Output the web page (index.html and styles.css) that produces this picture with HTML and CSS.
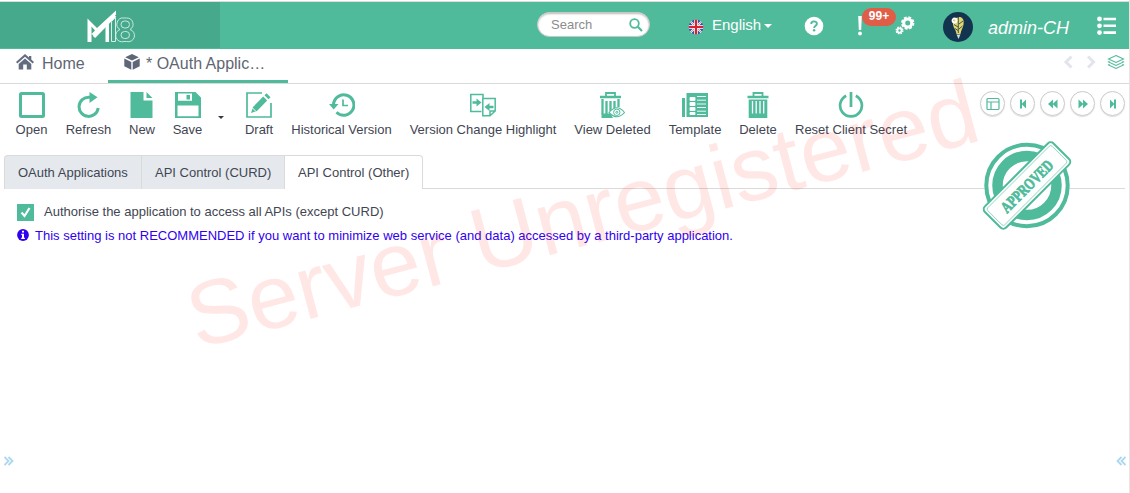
FILE: index.html
```html
<!DOCTYPE html>
<html lang="en">
<head>
<meta charset="utf-8">
<title>OAuth Applications</title>
<link rel="stylesheet" href="styles.css">
</head>
<body>
<div class="app">
  <header class="header">
    <div class="brand">
      <svg width="48" height="36" viewBox="0 0 48 36">
        <path d="M.5 9.500 10 19 29 1.500V5.500L7.500 27.500 4.500 25V33H.5z" fill="#fff"/>
        <path d="M4.500 17.500 8 21.500 4.500 25z" fill="#47a98b"/>
        <path d="M7 28 28 6.500" stroke="#fff" stroke-width="3.200"/>
        <path d="M18.500 17.500 22 14.500V33H18.500z" fill="#fff"/>
        <path d="M24.500 12.500 28.500 8.500V32.500H24.500z" fill="none" stroke="#d5efe6"/>
        <g fill="none" stroke="#d5efe6" stroke-width=".9">
          <path d="M33 20.500A6.200 6.200 0 0 1 37 9H39.500A6.200 6.200 0 0 1 43 20.500 6.200 6.200 0 0 1 39.500 32.500H37A6.200 6.200 0 0 1 33 20.500z"/>
          <rect x="34" y="12" width="8.500" height="7" rx="3.500"/>
          <rect x="34" y="22.500" width="8.500" height="7" rx="3.500"/>
        </g>
      </svg>
    </div>
    <div class="search"><span>Search</span>
      <svg width="14" height="14" viewBox="0 0 14 14" fill="none" stroke="#4fbb9b"><circle cx="5.500" cy="5.500" r="4.300" stroke-width="1.800"/><path d="M8.800 8.800 13 13" stroke-width="2.200"/></svg>
    </div>
    <div class="language">
      <svg class="flag" width="16" height="16" viewBox="0 0 16 16">
        <defs><clipPath id="round"><circle cx="8" cy="8" r="7.400"/></clipPath></defs>
        <g clip-path="url(#round)"><path fill="#3456a5" d="M0 0h16v16H0z"/><path d="M1 1 15 15M15 1 1 15" stroke="#fff" stroke-width="1.900"/><path d="M1 1 15 15M15 1 1 15" stroke="#d86c75" stroke-width=".8"/><path d="M8 0v16M0 8h16" stroke="#fff" stroke-width="3.600"/><path d="M8 0v16M0 8h16" stroke="#d8222f" stroke-width="2.200"/></g>
      </svg>
      <span>English</span><i class="caret"></i>
    </div>
    <svg class="help" width="20" height="20" viewBox="0 0 20 20"><circle cx="10" cy="10" r="9.300" fill="#fff"/><path d="M7.200 8C7.200 4.500 12.900 4.500 12.900 7.700 12.900 9.700 10.100 9.700 10.100 12" fill="none" stroke="#4fbb9b" stroke-width="1.900"/><circle cx="10.100" cy="14.300" r="1.200" fill="#4fbb9b"/></svg>
    <div class="alerts">
      <svg width="6" height="20" viewBox="0 0 6 20" fill="#fff"><path d="M1.200 0h3.600l-.6 14H1.800z"/><circle cx="3" cy="17.500" r="1.900"/></svg>
      <b class="count">99+</b>
    </div>
    <svg class="gears" width="20" height="20" viewBox="0 0 20 20" fill="none" stroke="#fff"><circle cx="12.700" cy="8" r="4" stroke-width="3"/><circle cx="12.700" cy="8" r="5.800" stroke-width="1.800" stroke-dasharray="2.800 1.755"/><circle cx="4.500" cy="15.500" r="2.100" stroke-width="1.800"/><circle cx="4.500" cy="15.500" r="3.300" stroke-width="1.400" stroke-dasharray="1.500 1.092"/></svg>
    <svg class="avatar" width="30" height="30" viewBox="0 0 30 30"><circle cx="15" cy="15" r="15" fill="#12344f"/><path d="M15 5.500C19 3.500 21.500 8 20.500 12.500 20 16 18 18 17.500 22H13.500C13 18 10.500 16 10 12.500 9.500 9 11 6 15 5.500z" fill="#e3d66b"/><path d="M15.300 5v16M11 12.500 15 15M20 9 16 12M12 16.500l3 2M19.500 14 16 17" stroke="#12344f" fill="none" stroke-width=".8"/><circle cx="11.500" cy="8.500" r="2" fill="none" stroke="#fff" stroke-width="1.800"/><path d="M13.500 22.500h4L15.500 27z" fill="#cfdbe0"/></svg>
    <span class="user">admin-CH</span>
    <svg class="menu" width="20" height="20" viewBox="0 0 20 20" fill="#fff"><circle cx="2.500" cy="3" r="2.400"/><circle cx="2.500" cy="9.800" r="2.400"/><circle cx="2.500" cy="16.600" r="2.400"/><path d="M6.500 1.700h12.500v2.600H6.500zM6.500 8.500h12.500v2.600H6.500zM6.500 15.300h12.500v2.600H6.500z"/></svg>
  </header>

  <nav class="pages">
    <a class="page home"><svg width="18" height="16" viewBox="0 0 18 16" fill="#636d80"><path d="M9 0 13 3.600V2h2.300v3.600L18 8.100l-1.300 1.400L9 2.800 1.300 9.500 0 8.100z"/><path d="M9 4.500 15.300 10v5.500h-4.500V10.500H7.200v5H2.700V10z"/></svg><span>Home</span></a>
    <a class="page active"><svg width="16" height="16" viewBox="0 0 16 16" fill="#5e6677"><path d="M8 0 14.800 3.200 8 6.600 1.200 3.200zM.3 4.500 7.300 8v7.700L.3 12.200zM15.700 4.500 8.700 8v7.700l7-3.500z"/></svg><span>* OAuth Applic…</span></a>
    <div class="page-tools">
      <svg width="64" height="16" viewBox="0 0 64 16" fill="none"><path d="M10.500 2.500 5 8l5.500 5.500" stroke="#e2e6ec" stroke-width="3"/><path d="M27 2.500 32.500 8 27 13.500" stroke="#e2e6ec" stroke-width="3"/><path d="M55 1.500 62.500 5 55 8.500 47.500 5zM48.500 7.200 47.500 8 55 11.500 62.500 8l-1-.8M48.500 10.200 47.500 11 55 14.500 62.500 11l-1-.8" stroke="#4fbb9b" stroke-width="1.100"/></svg>
    </div>
  </nav>

  <div class="toolbar">
    <a class="tool w-open"><svg viewBox="0 0 26 26"><rect x="1.500" y="1.500" width="23" height="23" rx="1" fill="none" stroke="#4fbb9b" stroke-width="3"/></svg><span>Open</span></a>
    <a class="tool w-refresh"><svg viewBox="0 0 26 26"><path d="M16.500 5.200H13A9.600 9.600 0 1 0 22.200 16" fill="none" stroke="#4fbb9b" stroke-width="3"/><path d="M13.500 0 21.500 5.300 13.500 11z" fill="#4fbb9b"/></svg><span>Refresh</span></a>
    <a class="tool w-new"><svg viewBox="0 0 26 26" fill="#4fbb9b"><path d="M1.500 0h13v8.500h9V26h-22zM17.500 0l6 6h-6z"/></svg><span>New</span></a>
    <a class="tool w-save"><svg viewBox="0 0 26 26"><path fill="#4fbb9b" fill-rule="evenodd" d="M0 0h20.500L26 5.500V26H0zM3 1.500v7.200h14V1.500zM2.500 13.500v10.700h21V13.500zM11.500 3h3.500v4.500h-3.500z"/></svg><span>Save</span></a>
    <i class="caret dark"></i>
    <a class="tool w-draft"><svg viewBox="0 0 26 26"><path d="M16 1H1v24h24V11" fill="none" stroke="#4fbb9b" stroke-width="1.700"/><path fill="#4fbb9b" d="m5 21 2-6L17.200 4.500l4 4L11 19zM18.500 3.200 20.500 1.200 24.500 5.200 22.500 7.200z"/><path d="m6.500 16 3.500 3.500" stroke="#fff"/></svg><span>Draft</span></a>
    <a class="tool w-history"><svg viewBox="0 0 26 26" fill="none" stroke="#4fbb9b"><path d="M4.500 14V12.500A10.200 10.200 0 1 1 7.500 20.300" stroke-width="3"/><path d="M0 12h9.500l-4.800 5.500z" fill="#4fbb9b" stroke="none"/><path d="M14 7.500v6h5" stroke-width="1.700"/></svg><span>Historical Version</span></a>
    <a class="tool w-highlight"><svg viewBox="0 0 26 26" fill="none" stroke="#4fbb9b" stroke-width="1.500"><path d="M11.500 19.500H.8V2.500H13V6M12.800 6.500h12.400V19L20 23.800h-7.200zM20 23.500V19h5"/><path d="M2.500 10.500h5M23.500 15h-5" stroke-width="2.400"/><path d="M6.500 6.500 11.500 10.500 6.500 14.500zM19.500 11 14.500 15 19.500 19z" fill="#4fbb9b" stroke="none"/></svg><span>Version Change Highlight</span></a>
    <a class="tool w-view"><svg viewBox="0 0 26 26" fill="none" stroke="#4fbb9b"><path d="M6 4V1h9v3" stroke-width="1.800"/><path d="M0 5h21" stroke-width="2.500"/><path d="M2.500 7v15.500M6.500 9v13M10.500 9v10M14.500 9v8M18.500 7v8" stroke-width="2.300"/><path d="M1.500 21.500h9L13 26H1.500z" fill="#4fbb9b" stroke="none"/><path d="M9 20.500Q17 11 24.500 20.500 17 29 9 20.500z" fill="#fff" stroke-width="1.100"/><circle cx="16.800" cy="20.300" r="3.200"/><circle cx="16.800" cy="20.300" r="1"/></svg><span>View Deleted</span></a>
    <a class="tool w-template"><svg viewBox="0 0 26 26"><path fill="#4fbb9b" d="M0 6h3v19H0zM4.500 1H26v24H4.500z"/><path d="M8 5.500h5v3H8zM8 10.500h5v3H8zM8 15.500h5v3H8zM8 20.500h5v2H8zM15 4.500h9M15 8.200h9M15 12h9M15 15.500h9M15 19.200h9M15 22.500h9" fill="#fff" stroke="#fff" stroke-width=".9"/></svg><span>Template</span></a>
    <a class="tool w-delete"><svg viewBox="0 0 26 26" fill="none" stroke="#4fbb9b"><path d="M8.500 4V1h9v3" stroke-width="1.800"/><path d="M2.500 5h21" stroke-width="2.500"/><path fill="#4fbb9b" stroke="none" d="M3.700 7.500h18.600V26H3.700z"/><path d="M7.500 9v12.500M11.200 9v12.500M15 9v12.500M18.700 9v12.500" stroke="#fff" stroke-width="1.300"/></svg><span>Delete</span></a>
    <a class="tool w-reset"><svg viewBox="0 0 26 26" fill="none" stroke="#4fbb9b" stroke-width="2.700"><path d="M8.200 3.700A10.900 10.900 0 1 0 17.800 3.700M13 0v15"/></svg><span>Reset Client Secret</span></a>
    <div class="record-nav">
      <a class="round"><svg viewBox="0 0 14 14" fill="none" stroke="#4fbb9b" stroke-width="1.200"><rect x="1" y="1.500" width="12" height="11" rx="1"/><path d="M1 5h12M5 5v7.500"/></svg></a>
      <a class="round"><svg viewBox="0 0 14 14" fill="#4fbb9b"><path d="M4 2.500h2v4l4-4v9L6 7.500v4H4z"/></svg></a>
      <a class="round"><svg viewBox="0 0 14 14" fill="#4fbb9b"><path d="M7 2.500v9L2 7zM11.500 2.500v9L6.500 7z"/></svg></a>
      <a class="round"><svg viewBox="0 0 14 14" fill="#4fbb9b"><path d="M2.500 2.500v9L7.500 7zM7 2.500v9L12 7z"/></svg></a>
      <a class="round"><svg viewBox="0 0 14 14" fill="#4fbb9b"><path d="M10 2.500H8v4l-4-4v9l4-4v4h2z"/></svg></a>
    </div>
  </div>

  <div class="tabs">
    <a class="tab t1">OAuth Applications</a><a class="tab t2">API Control (CURD)</a><a class="tab t3 current">API Control (Other)</a>
  </div>

  <main class="content">
    <label class="check-row"><i class="checkbox"><svg width="17" height="17" viewBox="0 0 17 17"><path d="m4.500 8.500 3 3.500 5-8" fill="none" stroke="#fff" stroke-width="2.200"/></svg></i><span class="check-text">Authorise the application to access all APIs (except CURD)</span></label>
    <p class="note"><svg width="12" height="12" viewBox="0 0 12 12"><circle cx="6" cy="6" r="5.900" fill="#3000f0"/><path d="M5 1.800h2v1.700H5zM4.300 4.700H7v4h.9v1.200H4.200V8.700H5V5.900h-.7z" fill="#fff"/></svg><span class="note-text">This setting is not RECOMMENDED if you want to minimize web service (and data) accessed by a third-party application.</span></p>
  </main>

  <footer class="edges">
    <svg width="10" height="10" viewBox="0 0 10 10" fill="none" stroke="#acd8ef" stroke-width="1.800"><path d="m.5 1 4 4-4 4M4.500 1l4 4-4 4"/></svg>
    <svg width="10" height="10" viewBox="0 0 10 10" fill="none" stroke="#acd8ef" stroke-width="1.800"><path d="M5.500 1 1.500 5l4 4M9.500 1 5.500 5l4 4"/></svg>
  </footer>

  <svg class="stamp" width="94" height="94" viewBox="0 0 94 94">
    <circle cx="47" cy="46.500" r="40.700" fill="#fff" stroke="#4fbb9b" stroke-width="4"/>
    <circle cx="47" cy="46.500" r="29.500" fill="none" stroke="#4fbb9b" stroke-width="10.500"/>
    <g transform="translate(47 46.500) rotate(-45)">
      <rect x="-48.500" y="-15" width="97" height="30" rx="4" fill="#fff" stroke="#4fbb9b" stroke-width="2"/>
      <rect x="-45.500" y="-12" width="91" height="24" rx="2" fill="none" stroke="#7fcdb6" stroke-width=".8"/>
      <text class="stamp-text" x="-34" y="5.800" textLength="67" lengthAdjust="spacingAndGlyphs">APPROVED</text>
    </g>
  </svg>
  <svg class="watermark" width="1130" height="493" viewBox="0 0 1130 493"><text class="watermark-text" transform="translate(197 349) rotate(-14.900)" textLength="814">Server Unregistered</text></svg>
</div>
</body>
</html>
```
FILE: styles.css
```css
* { box-sizing: border-box; }
body { margin: 0; background: #fff; color: #3f4652; font: 13px "Liberation Sans", Arial, sans-serif; }
svg { display: block; flex: none; }
.app { position: relative; width: 1130px; height: 493px; overflow: hidden; display: flex; flex-direction: column; border-right: 1px solid #e6e6e6; padding-top: 1px; }

.header { height: 48px; flex: none; border-top: 1px solid #dcdcdc; background: #4fbb9b; display: flex; align-items: flex-start; color: #fff; }
.brand { width: 220px; height: 46px; background: #47a98b; padding: 7px 0 0 87px; }
.search { margin: 10px 0 0 317px; width: 113px; height: 25px; border-radius: 13px; background: #fff; border: 1px solid #c8c8c8; box-shadow: inset 0 1px 2px #bbb; color: #8c8c8c; display: flex; align-items: center; justify-content: space-between; padding: 0 6px 0 13px; }
.language { margin: 14px 0 0 38px; width: 84px; height: 20px; display: flex; align-items: center; font-size: 15px; line-height: 18px; padding-bottom: 2px; white-space: nowrap; }
.flag { margin: 3px 8px 0 0; }
.caret { width: 0; height: 0; border: 4px solid transparent; border-top-color: #fff; border-bottom: 0; margin: 2px 0 0 3px; flex: none; }
.help { margin: 14px 0 0 32px; }
.alerts { margin: 14px 0 0 33px; width: 10px; position: relative; }
.count { position: absolute; left: 5px; top: -8px; width: 34px; height: 18px; border-radius: 9px; background: #e05d48; font-size: 12px; line-height: 17px; text-align: center; }
.gears { margin: 13px 0 0 28px; }
.avatar { margin: 10px 0 0 28px; }
.user { margin: 16px 0 0 15px; width: 82px; font-size: 18px; line-height: 20px; font-style: italic; white-space: nowrap; }
.menu { margin: 14px 0 0 27px; }

.pages { height: 35px; flex: none; border-bottom: 1px solid #dadada; display: flex; font-size: 16px; color: #5f6673; }
.page { display: flex; height: 34px; padding-top: 5px; white-space: nowrap; line-height: 19px; }
.page svg { margin-right: 8px; }
.home { width: 108px; padding-left: 16px; }
.active { width: 180px; padding-left: 16px; border-bottom: 3px solid #4fbb9b; }
.active svg { margin-right: 6px; }
.page-tools { margin-left: auto; padding: 5px 4px 0 0; }

.toolbar { height: 71px; flex: none; display: flex; padding: 8px 4px 0 15px; gap: 18px; }
.tool { display: flex; flex-direction: column; align-items: center; gap: 4px; white-space: nowrap; line-height: 16px; }
.tool svg { width: 26px; height: 26px; }
.w-open { width: 33px; }
.w-refresh { width: 45px; }
.w-new { width: 26px; }
.w-save { width: 29px; }
.w-draft { width: 28px; }
.w-history { width: 101px; }
.w-highlight { width: 146px; }
.w-view { width: 77px; }
.w-template { width: 52px; }
.w-delete { width: 38px; }
.w-reset { width: 112px; }
.dark { border-width: 3px; border-bottom: 0; border-top-color: #333946; margin: 24px 3px 0 -2px; }
.record-nav { margin-left: auto; display: flex; gap: 5px; margin-top: -1px; }
.round { width: 25px; height: 25px; border: 1px solid #c9c9c9; border-radius: 50%; display: flex; align-items: center; justify-content: center; box-shadow: 0 1px 1px #ddd; }
.round svg { width: 14px; height: 14px; }

.tabs { height: 34px; flex: none; margin: 0 4px; border-bottom: 1px solid #dadada; display: flex; }
.tab { height: 34px; padding-left: 13px; line-height: 34px; white-space: nowrap; border: 1px solid #dadada; border-right: 0; border-bottom: 0; background: #e5e9ee; }
.t1 { width: 137px; border-top-left-radius: 4px; }
.t2 { width: 143px; }
.t3 { width: 139px; border-right: 1px solid #dadada; border-top-right-radius: 4px; }
.current { background: #fff; }

.content { padding: 15px 0 0 17px; flex: 1; }
.check-row { display: flex; gap: 10px; line-height: 16px; white-space: nowrap; }
.checkbox { width: 17px; height: 17px; background: #4fbb9b; }
.note { margin: 8px 0 0; display: flex; gap: 6px; line-height: 14px; color: #3000f0; white-space: nowrap; }
.edges { height: 38px; flex: none; display: flex; justify-content: space-between; padding: 1px 3px 0 4px; }

.stamp { position: absolute; left: 980px; top: 139px; }
.stamp-text { font: bold 16px "Liberation Serif", "Times New Roman", serif; fill: #4fbb9b; stroke: #4fbb9b; stroke-width: .8px; }
.watermark { position: absolute; left: 0; top: 0; pointer-events: none; }
.watermark-text { font: 91px "Liberation Sans", Arial, sans-serif; fill: rgba(255, 20, 0, .1); }
```
